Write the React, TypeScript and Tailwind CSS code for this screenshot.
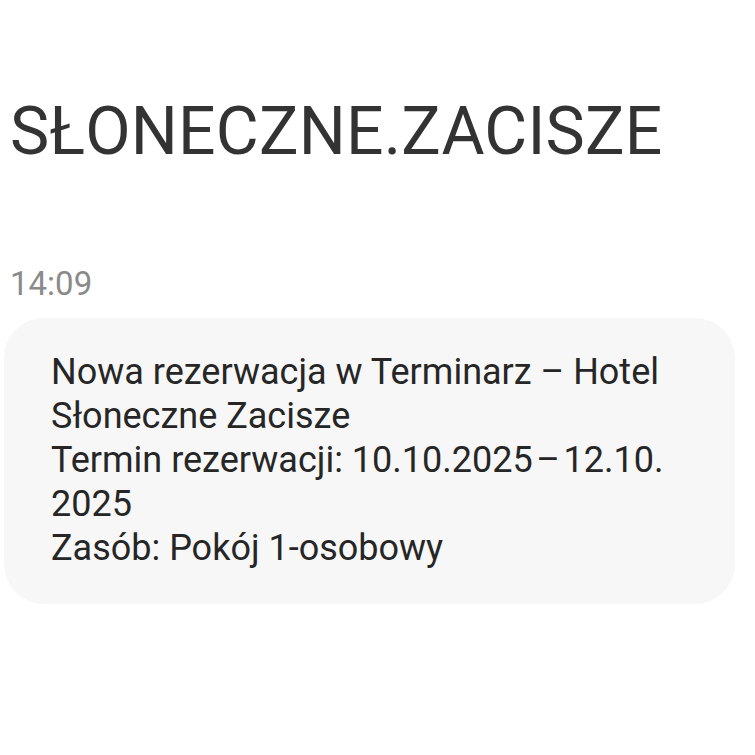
import React from 'react';

export default function App() {
  return (
    <div className="w-[755px] h-[755px] bg-white overflow-hidden" style={{ fontFamily: 'Roboto, "Noto Sans", sans-serif' }}>
      <div className="pt-[92px] pl-[10px]">
        <h1 className="text-[66px] leading-[80px] text-[#333333] font-normal tracking-[0.2px]">SŁONECZNE.ZACISZE</h1>
      </div>
      <div className="mt-[94px] pl-[10px] text-[33px] leading-[36px] text-[#8a8a8a]">14:09</div>
      <div className="mt-[16px] ml-[4px] w-[731px] h-[286px] rounded-[40px] bg-[#f7f7f7] pl-[47px] pr-[40px] pt-[32px]">
        <p className="text-[36px] leading-[44px] text-[#262626]">
          Nowa rezerwacja w Terminarz – Hotel
          <br />
          Słoneczne Zacisze
          <br />
          Termin rezerwacji: 10.10.2025{'\u200A–\u200A'}12.10.
          <br />
          2025
          <br />
          Zasób: Pokój 1-osobowy
        </p>
      </div>
    </div>
  );
}
